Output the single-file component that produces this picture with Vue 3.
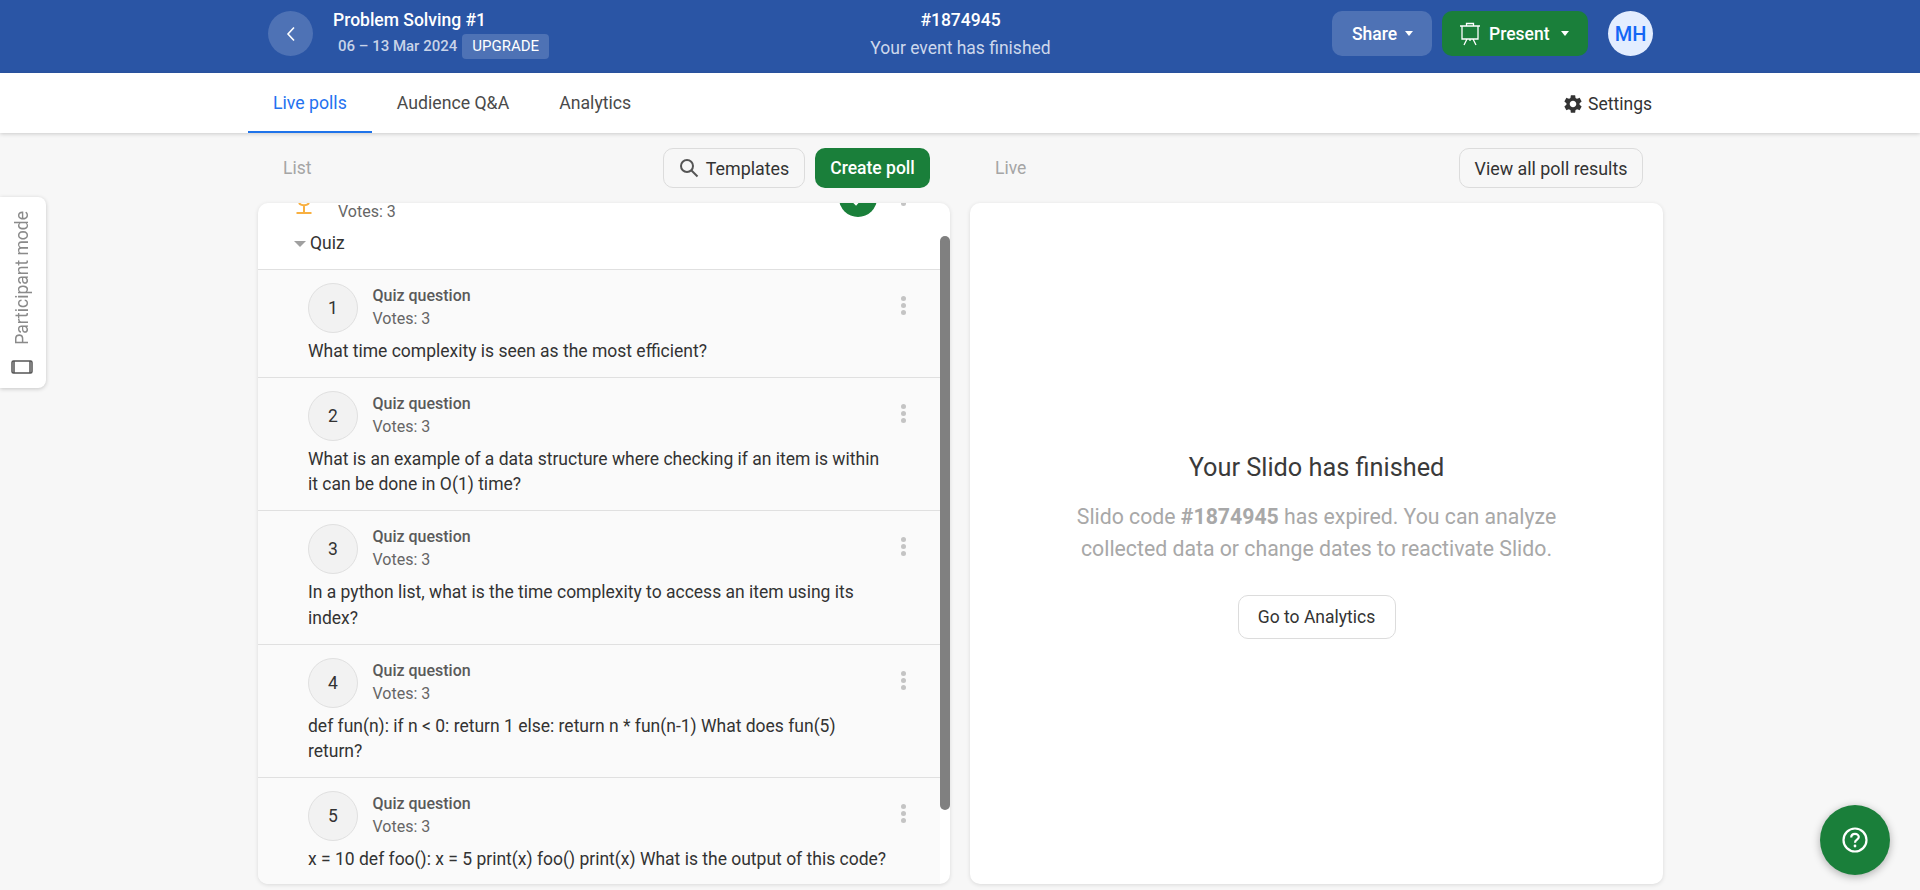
<template>
  <div class="page">
    <header class="topbar">
      <div class="event">
        <button class="back">
          <svg width="12" height="18" viewBox="0 0 12 18"><polyline points="9,2.5 3,9 9,15.5" fill="none" stroke="#fff" stroke-width="1.6" /></svg>
        </button>
        <div class="event-info">
          <div class="event-name">Problem Solving #1</div>
          <div class="event-dates">
            <span>06 – 13 Mar 2024</span>
            <span class="upgrade">UPGRADE</span>
          </div>
        </div>
      </div>
      <div class="event-status">
        <div class="code">#1874945</div>
        <div class="status">Your event has finished</div>
      </div>
      <div class="actions">
        <button class="share">Share<span class="caret"></span></button>
        <button class="present">
          <svg width="22" height="24" viewBox="0 0 22 24" fill="none" stroke="#fff" stroke-width="1.3">
            <path d="M1 4h20M3 4v13h16V4M7.5 4V1.5h7V4M8 17l-3 6M14 17l3 6M11 17v2" />
          </svg>
          <span>Present</span>
          <span class="caret"></span>
        </button>
        <div class="avatar">MH</div>
      </div>
    </header>

    <nav class="tabs">
      <a v-for="tab in tabs" :key="tab" class="tab" :class="{ active: tab === 'Live polls' }">{{ tab }}</a>
      <a class="settings">
        <svg width="22" height="22" viewBox="0 0 24 24" fill="#333"><path d="M19.14 12.94c.04-.3.06-.61.06-.94 0-.32-.02-.64-.07-.94l2.03-1.58c.18-.14.23-.41.12-.61l-1.92-3.32c-.12-.22-.37-.29-.59-.22l-2.39.96c-.5-.38-1.03-.7-1.62-.94l-.36-2.54c-.04-.24-.24-.41-.48-.41h-3.84c-.24 0-.43.17-.47.41l-.36 2.54c-.59.24-1.13.57-1.62.94l-2.39-.96c-.22-.08-.47 0-.59.22L2.74 8.87c-.12.21-.08.47.12.61l2.03 1.58c-.05.3-.09.63-.09.94s.02.64.07.94l-2.03 1.58c-.18.14-.23.41-.12.61l1.92 3.32c.12.22.37.29.59.22l2.39-.96c.5.38 1.03.7 1.62.94l.36 2.54c.05.24.24.41.48.41h3.84c.24 0 .44-.17.47-.41l.36-2.54c.59-.24 1.13-.56 1.62-.94l2.39.96c.22.08.47 0 .59-.22l1.92-3.32c.12-.22.07-.47-.12-.61l-2.01-1.58zM12 15.6c-1.98 0-3.6-1.62-3.6-3.6s1.62-3.6 3.6-3.6 3.6 1.62 3.6 3.6-1.62 3.6-3.6 3.6z" /></svg>
        <span>Settings</span>
      </a>
    </nav>

    <main class="columns">
      <section class="column">
        <div class="toolbar">
          <span class="column-title">List</span>
          <button class="btn templates">
            <svg width="20" height="20" viewBox="0 0 20 20" fill="none" stroke="#555" stroke-width="2"><circle cx="8" cy="8" r="6" /><path d="M12.5 12.5L18.5 18.5" /></svg>
            Templates
          </button>
          <button class="btn create">Create poll</button>
        </div>
        <div class="panel list-panel">
          <div class="list">
            <div class="scrolled">
              <div class="prev-poll">
                <svg class="trophy" width="16" height="16" viewBox="0 0 16 16" fill="none" stroke="#f8b041" stroke-width="2"><path d="M3 5c2 3 8 3 10 0M8 7v7M0.5 15h15" /></svg>
                <span class="prev-votes">Votes: 3</span>
                <span class="done">
                  <svg width="38" height="38" viewBox="0 0 38 38" fill="none" stroke="#fff" stroke-width="2.4"><path d="M12 20l5 5 9-10" /></svg>
                </span>
                <span class="dots prev-dots"><i></i><i></i><i></i></span>
              </div>
              <div class="quiz-title"><span class="quiz-caret"></span>Quiz</div>
              <article v-for="q in questions" :key="q.n" class="question">
                <div class="question-head">
                  <span class="number">{{ q.n }}</span>
                  <div class="meta">
                    <div class="kind">Quiz question</div>
                    <div class="votes">Votes: 3</div>
                  </div>
                  <span class="dots"><i></i><i></i><i></i></span>
                </div>
                <p class="question-text">{{ q.text }}</p>
              </article>
            </div>
          </div>
          <div class="track"><div class="thumb"></div></div>
        </div>
      </section>

      <section class="column">
        <div class="toolbar">
          <span class="column-title">Live</span>
          <button class="btn results">View all poll results</button>
        </div>
        <div class="panel finished">
          <h2>Your Slido has finished</h2>
          <p>Slido code <b>#1874945</b> has expired. You can analyze<br />collected data or change dates to reactivate Slido.</p>
          <button class="analytics">Go to Analytics</button>
        </div>
      </section>
    </main>

    <div class="participant">
      <span>Participant mode</span>
      <svg width="22" height="14" viewBox="0 0 22 14" fill="none" stroke="#555" stroke-width="1.5"><rect x="1" y="1" width="20" height="12" rx="1.5" /><path d="M3 1v12M19 1v12" /></svg>
    </div>

    <button class="help">
      <svg width="26" height="26" viewBox="0 0 26 26" fill="none" stroke="#fff" stroke-width="2.2">
        <circle cx="13" cy="13" r="11.5" />
        <path d="M9.2 10.4c0-2.2 1.7-3.6 3.8-3.6s3.8 1.4 3.8 3.3c0 2.6-3.8 2.7-3.8 5.6" />
        <circle cx="13" cy="19" r="1.4" fill="#fff" stroke="none" />
      </svg>
    </button>
  </div>
</template>

<script setup>
const tabs = ['Live polls', 'Audience Q&A', 'Analytics']

const questions = [
  { n: 1, text: 'What time complexity is seen as the most efficient?' },
  { n: 2, text: 'What is an example of a data structure where checking if an item is within it can be done in O(1) time?' },
  { n: 3, text: 'In a python list, what is the time complexity to access an item using its index?' },
  { n: 4, text: 'def fun(n): if n < 0: return 1 else: return n * fun(n-1) What does fun(5) return?' },
  { n: 5, text: 'x = 10 def foo(): x = 5 print(x) foo() print(x) What is the output of this code?' }
]
</script>

<style>
body {
  background: #f7f7f7;
  overflow: hidden;
}
</style>

<style scoped>
.page {
  height: 890px;
  font-family: Roboto, "Liberation Sans", sans-serif;
  color: #333;
  background: #f7f7f7;
}

button {
  font-family: inherit;
  border: none;
  cursor: pointer;
}

.topbar {
  height: 73px;
  box-sizing: border-box;
  padding: 0 267px 6px 268px;
  background: #2a55a5;
  color: #fff;
  display: grid;
  grid-template-columns: 1fr auto 1fr;
  align-items: center;
}

.event {
  display: flex;
  align-items: center;
  gap: 20px;
}

.back {
  width: 45px;
  height: 45px;
  padding: 0;
  border-radius: 50%;
  background: #4e72b5;
  display: flex;
  align-items: center;
  justify-content: center;
}

.event-name {
  font-size: 17.5px;
  font-weight: 500;
  line-height: 22px;
}

.event-dates {
  display: flex;
  align-items: center;
  gap: 5px;
  padding-left: 5px;
  margin-top: 3px;
  font-size: 15px;
  font-weight: 500;
  color: #c8d3e8;
}

.upgrade {
  background: #4e72b5;
  color: #fff;
  font-weight: 400;
  padding: 0 10px;
  line-height: 25px;
  border-radius: 4px;
}

.event-status {
  text-align: center;
}

.code {
  font-size: 17.5px;
  font-weight: 500;
  line-height: 22px;
}

.status {
  font-size: 17.5px;
  line-height: 22px;
  margin-top: 6px;
  color: #cdd8ec;
}

.actions {
  display: flex;
  justify-content: flex-end;
  align-items: center;
}

.share,
.present {
  height: 45px;
  border-radius: 10px;
  color: #fff;
  font-size: 17.5px;
  font-weight: 500;
  display: flex;
  align-items: center;
}

.share {
  width: 100px;
  padding: 0 0 0 20px;
  background: #4e72b5;
}

.present {
  width: 146px;
  margin-left: 10px;
  padding: 0 0 0 17px;
  background: #1a7f3a;
  gap: 8px;
}

.caret {
  width: 0;
  height: 0;
  border-left: 4.5px solid transparent;
  border-right: 4.5px solid transparent;
  border-top: 5px solid #fff;
  margin-left: 8px;
}

.present .caret {
  margin-left: 3px;
}

.avatar {
  width: 45px;
  height: 45px;
  margin-left: 20px;
  border-radius: 50%;
  background: #e3edff;
  color: #1466f5;
  font-size: 20px;
  font-weight: 500;
  display: flex;
  align-items: center;
  justify-content: center;
}

.tabs {
  height: 60px;
  box-sizing: border-box;
  padding: 0 268px 0 248px;
  background: #fff;
  box-shadow: 0 1px 4px rgba(0, 0, 0, 0.18);
  display: flex;
  align-items: stretch;
  position: relative;
}

.tab {
  padding: 0 25px;
  font-size: 17.7px;
  line-height: 60px;
  height: 60px;
  box-sizing: border-box;
  color: #4a4a4a;
  border-bottom: 2px solid transparent;
}

.tab.active {
  color: #2472f0;
  border-bottom-color: #1f73ea;
}

.settings {
  margin-left: auto;
  display: flex;
  align-items: center;
  gap: 4px;
  font-size: 17.5px;
  color: #333;
  padding-top: 2px;
}

.columns {
  display: grid;
  grid-template-columns: 692px 693px;
  gap: 20px;
  padding: 15px 0 0 258px;
}

.toolbar {
  height: 40px;
  display: flex;
  align-items: center;
  padding-right: 20px;
  gap: 10px;
}

.column-title {
  margin-left: 25px;
  margin-right: auto;
  font-size: 17.5px;
  color: #a5a5a5;
}

.btn {
  height: 40px;
  box-sizing: border-box;
  border-radius: 10px;
  font-size: 17.85px;
  display: flex;
  align-items: center;
  justify-content: center;
}

.templates {
  width: 142px;
  gap: 7px;
  background: #f7f7f7;
  border: 1px solid #dcdcdc;
  color: #333;
}

.create {
  width: 115px;
  background: #1a7f3a;
  color: #fff;
  font-size: 17.5px;
  font-weight: 500;
}

.results {
  width: 184px;
  background: #f7f7f7;
  border: 1px solid #dcdcdc;
  color: #333;
}

.panel {
  height: 681px;
  margin-top: 15px;
  background: #fff;
  border-radius: 10px;
  box-shadow: 0 1px 4px rgba(0, 0, 0, 0.12);
  overflow: hidden;
}

.list-panel {
  display: flex;
}

.list {
  flex: 1;
  overflow: hidden;
}

.scrolled {
  margin-top: -40px;
}

.track {
  width: 10px;
  flex-shrink: 0;
  padding-top: 33px;
}

.thumb {
  height: 574px;
  background: #808080;
  border-radius: 5px;
}

.prev-poll {
  height: 64px;
  padding-left: 38px;
  display: flex;
  align-items: flex-start;
}

.trophy {
  margin-top: 35px;
  flex-shrink: 0;
}

.prev-votes {
  margin: 37px 0 0 26px;
  font-size: 16px;
  line-height: 23px;
  color: #666;
}

.done {
  width: 38px;
  height: 38px;
  margin: 16px 0 0 auto;
  border-radius: 50%;
  background: #1a7f3a;
}

.dots {
  margin-left: auto;
  display: flex;
  flex-direction: column;
  gap: 2px;
  flex-shrink: 0;
}

.dots i {
  width: 5px;
  height: 5px;
  border-radius: 50%;
  background: #c4c4c4;
}

.prev-dots {
  margin: 24px 34px 0 24px;
}

.quiz-title {
  height: 42px;
  padding-left: 36px;
  display: flex;
  align-items: flex-start;
  font-size: 17.5px;
  line-height: 32px;
  color: #333;
}

.quiz-caret {
  width: 0;
  height: 0;
  margin: 14px 4px 0 0;
  border-left: 6px solid transparent;
  border-right: 6px solid transparent;
  border-top: 6px solid #a0a0a0;
}

.question {
  box-sizing: border-box;
  padding: 13px 34px 12.67px 50px;
  background: #fafafa;
  border-top: 1px solid #e0e0e0;
}

.question-head {
  display: flex;
  align-items: flex-start;
}

.number {
  width: 50px;
  height: 50px;
  box-sizing: border-box;
  flex-shrink: 0;
  border: 1px solid #e0e0e0;
  border-radius: 50%;
  background: #f2f2f2;
  font-size: 17.5px;
  display: flex;
  align-items: center;
  justify-content: center;
}

.meta {
  margin-left: 14.5px;
  padding-top: 1px;
  font-size: 16px;
  line-height: 23px;
}

.kind {
  font-weight: 500;
  color: #5a5a5a;
}

.votes {
  color: #666;
}

.question-head .dots {
  margin-top: 13px;
  margin-right: 0;
}

.question-text {
  margin: 6px 16px 0 0;
  font-size: 17.5px;
  line-height: 25.33px;
  color: #333;
}

.finished {
  box-sizing: border-box;
  padding-top: 249.5px;
  display: flex;
  flex-direction: column;
  align-items: center;
  text-align: center;
}

.finished h2 {
  margin: 0;
  font-size: 25.3px;
  font-weight: 400;
  line-height: 30px;
  color: #3a3a3a;
}

.finished p {
  margin: 18.5px 0 0;
  font-size: 21.25px;
  line-height: 32px;
  color: #a8a8a8;
}

.analytics {
  width: 158px;
  height: 44px;
  margin-top: 30px;
  box-sizing: border-box;
  background: #fff;
  border: 1px solid #dcdcdc;
  border-radius: 10px;
  font-size: 17.5px;
  color: #333;
}

.participant {
  position: fixed;
  left: 0;
  top: 197px;
  width: 46px;
  height: 191px;
  box-sizing: border-box;
  padding: 14px 2px 0 0;
  background: #fff;
  border-radius: 0 8px 8px 0;
  box-shadow: 0 1px 4px rgba(0, 0, 0, 0.2);
  display: flex;
  flex-direction: column;
  align-items: center;
  gap: 15px;
  font-size: 17.5px;
  color: #8a8a8a;
}

.participant span {
  writing-mode: vertical-rl;
  transform: rotate(180deg);
}

.help {
  position: fixed;
  left: 1820px;
  top: 805px;
  width: 70px;
  height: 70px;
  border-radius: 50%;
  background: #1a7f3a;
  box-shadow: 0 2px 8px rgba(0, 0, 0, 0.3);
  display: flex;
  align-items: center;
  justify-content: center;
  padding: 0;
}
</style>
